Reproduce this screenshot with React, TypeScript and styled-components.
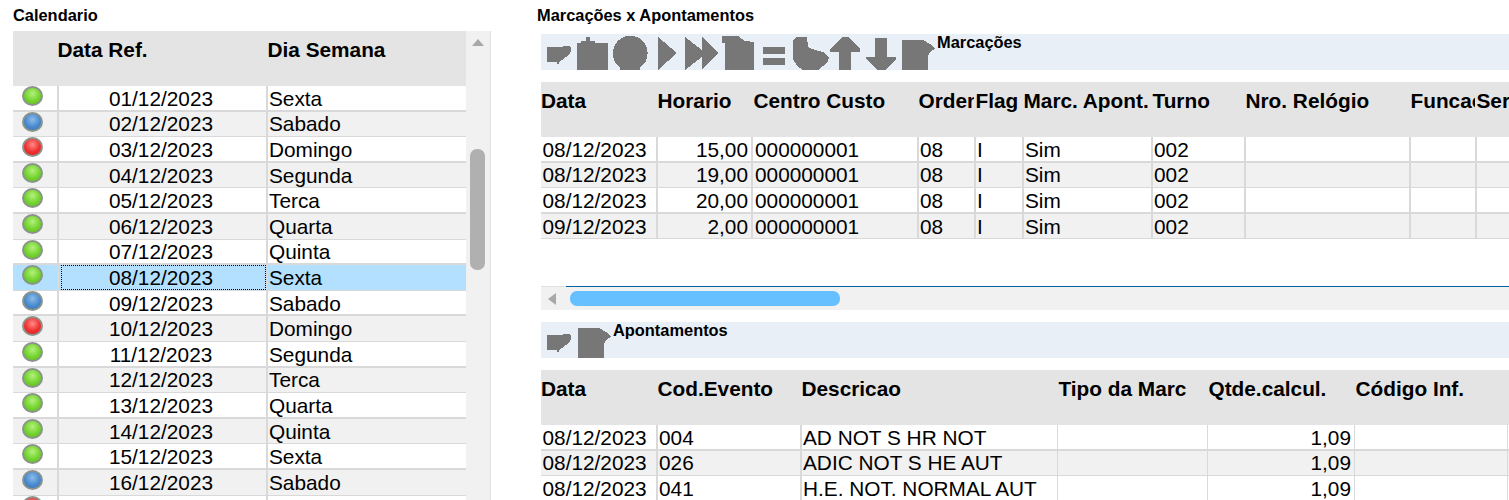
import React from "react";
import styled, { createGlobalStyle } from "styled-components";

const Global = createGlobalStyle`
  html, body { margin: 0; padding: 0; background: #fff; }
  body { font-family: "Liberation Sans", Arial, sans-serif; color: #000; height: 500px; overflow: hidden; }
  * { box-sizing: border-box; }
`;

const Page = styled.div`
  display: flex;
  height: 500px;
  overflow: hidden;
  padding-left: 13px;
`;
const LeftPanel = styled.section`
  width: 478px;
  flex: none;
  display: flex;
  flex-direction: column;
`;
const RightPanel = styled.section`
  flex: 1;
  min-width: 0;
  margin-left: 46px;
  overflow: hidden;
`;
const Title = styled.h2<{ $h: number }>`
  margin: 0;
  height: ${(p) => p.$h}px;
  line-height: 31px;
  font-size: 16.4px;
  font-weight: 700;
  white-space: nowrap;
`;
const CalendarBody = styled.div`
  display: flex;
  flex: 1;
  min-height: 0;
`;
const CalendarTable = styled.div`
  width: 453px;
  flex: none;
`;
const VScroll = styled.div`
  width: 25px;
  flex: none;
  background: #f1f1f1;
  border-right: 1px solid #e2e2e2;
  display: flex;
  flex-direction: column;
  align-items: center;
  padding: 8px 1px 0 0;
`;
const UpArrow = styled.div`
  width: 0;
  height: 0;
  border-left: 6px solid transparent;
  border-right: 6px solid transparent;
  border-bottom: 7px solid #a8a8a8;
`;
const VThumb = styled.div`
  width: 15px;
  height: 121px;
  margin-top: 103px;
  border-radius: 7px;
  background: #b0b0b0;
`;
const Marcacoes = styled.div`
  margin-left: 4px;
`;
const Toolbar = styled.div`
  height: 36px;
  background: #e8eff6;
  display: flex;
  align-items: flex-start;
  padding-left: 6px;
`;
const ToolSvg = styled.svg<{ $gap: number }>`
  flex: none;
  display: block;
  margin-left: ${(p) => p.$gap}px;
  fill: #777777;
`;
const ToolLabel = styled.span`
  font-size: 16.4px;
  font-weight: 700;
  line-height: 16px;
  margin-left: 2px;
  white-space: nowrap;
`;
const GridArea = styled.div<{ $h?: number }>`
  margin-top: 12px;
  ${(p) => (p.$h ? `height: ${p.$h}px;` : "")}
`;
const HeadRow = styled.div<{ $cols: string }>`
  display: grid;
  grid-template-columns: ${(p) => p.$cols};
  height: 55px;
  background: #e4e4e4;
`;
const HeadCell = styled.div<{ $pad?: number }>`
  font-size: 20.8px;
  font-weight: 700;
  line-height: 24px;
  padding: 7px 0 0 ${(p) => p.$pad ?? 1.5}px;
  overflow: hidden;
  white-space: nowrap;
`;
const DataRow = styled.div<{ $cols: string; $odd: boolean; $sel?: boolean }>`
  display: grid;
  grid-template-columns: ${(p) => p.$cols};
  height: 25.6px;
  background: ${(p) => (p.$sel ? "#b3e0ff" : p.$odd ? "#ffffff" : "#f1f1f1")};
  box-shadow: inset 0 ${(p) => (p.$odd ? "-2px" : "-1px")} 0 #d9d9d9;
`;
const Cell = styled.div<{ $line?: "none" | "thin" | "thick"; $right?: boolean; $pad?: number; $rightPad?: number }>`
  font-size: 20.8px;
  line-height: 24px;
  height: 100%;
  min-width: 0;
  overflow: hidden;
  white-space: nowrap;
  display: flex;
  align-items: center;
  padding-left: ${(p) => p.$pad ?? 1}px;
  border-left: ${(p) => (p.$line === "none" ? "0" : p.$line === "thin" ? "1px solid #d9d9d9" : "2px solid #d9d9d9")};
  justify-content: ${(p) => (p.$right ? "flex-end" : "flex-start")};
  padding-right: ${(p) => p.$rightPad ?? 0}px;
`;
const BallCell = styled.div`
  padding-left: 9px;
  height: 100%;
`;
const tones = {
  green: ["#b4f07c", "#74d430", "#5cb81e"],
  blue: ["#8dbcea", "#4a8ace", "#3670b0"],
  red: ["#ff8a8a", "#f03030", "#d81c1c"],
};
const Ball = styled.div<{ $tone: keyof typeof tones }>`
  width: 21px;
  height: 20px;
  border-radius: 50%;
  border: 2px solid #8b948b;
  background: radial-gradient(circle at 50% 35%, ${(p) => tones[p.$tone][0]} 0%, ${(p) => tones[p.$tone][1]} 55%, ${(p) => tones[p.$tone][2]} 100%);
`;
const DateFocus = styled.div<{ $sel: boolean }>`
  flex: 1;
  height: calc(100% - 1px);
  display: flex;
  align-items: center;
  justify-content: center;
  padding: 1px 5px 0 0;
  border: 1px ${(p) => (p.$sel ? "dotted #000" : "solid transparent")};
  margin: 0 0 1px 1px;
`;
const HScroll = styled.div`
  display: flex;
  height: 24px;
  background: #f1f1f1;
`;
const HButton = styled.div`
  width: 25px;
  flex: none;
  border-top: 1px solid #e0e0e0;
  display: flex;
  align-items: center;
  padding-left: 7px;
`;
const LeftArrow = styled.div`
  width: 0;
  height: 0;
  border-top: 6px solid transparent;
  border-bottom: 6px solid transparent;
  border-right: 8px solid #a8a8a8;
`;
const HTrack = styled.div`
  flex: 1;
  border-top: 1px solid #005f9e;
  padding: 4px 0 0 4px;
`;
const HThumb = styled.div`
  width: 270px;
  height: 15px;
  border-radius: 7px;
  background: #66bfff;
`;
const Apontamentos = styled.div`
  margin: 12px 0 0 4px;
`;

type Shape = { x0: number; x1: number; d: string; gap: number };
const arrowIcon =
  "M547 47L562 47L563 46L569 46L571 48L571 51L570 53L566 57L562 60L559 62L559 64L557 64L557 62L547 62Z";
const docIcon = (dx: number) =>
  `M${902 + dx} 40L${923 + dx} 40L${930 + dx} 44L${935 + dx} 49L${930 + dx} 52L${928 + dx} 56L${928 + dx} 70L${902 + dx} 70Z`;
const topIcons: Shape[] = [
  { x0: 547, x1: 572, gap: 0, d: arrowIcon },
  { x0: 577, x1: 608, gap: 5, d: "M577 43L581 43L581 41L586 41L586 37L590 37L590 41L595 41L595 43L608 43L608 70L577 70Z" },
  { x0: 613, x1: 648, gap: 5, d: "M613 53A17.3 17.3 0 1 1 647.6 53A17.3 17.3 0 0 1 640 67.5L640 70L620 70L620 67.5A17.3 17.3 0 0 1 613 53Z" },
  { x0: 658, x1: 677, gap: 10, d: "M658 37L677 53L658 70Z" },
  { x0: 685, x1: 718, gap: 8, d: "M685 37L702 50L702 37L718 53L702 70L702 57L685 70Z" },
  { x0: 722, x1: 754, gap: 4, d: "M722 36L738 36L745 41L754 42L754 70L725 70L725 43L722 43Z" },
  { x0: 763, x1: 785, gap: 9, d: "M763 47L785 47L785 54L763 54ZM763 58L785 58L785 65L763 65Z" },
  { x0: 793, x1: 829, gap: 8, d: "M793 40L797 37L807 37L808 47L812 49L823 52L829 57L828 62L823 66L818 70L803 70L797 66L793 59Z" },
  { x0: 830, x1: 860, gap: 1, d: "M842 37L848 37L860 49L860 52L851 52L851 70L839 70L839 52L830 52L830 50Z" },
  { x0: 866, x1: 896, gap: 6, d: "M875 38L887 38L887 57L896 57L896 59L890 66L885 70L878 70L873 66L866 59L866 57L875 57Z" },
  { x0: 902, x1: 935, gap: 6, d: docIcon(0) },
];
const bottomIcons: Shape[] = [
  { x0: 547, x1: 572, gap: 0, d: arrowIcon },
  { x0: 578, x1: 611, gap: 6, d: docIcon(-324) },
];

function Tools({ icons, label }: { icons: Shape[]; label: string }) {
  return (
    <Toolbar>
      {icons.map((s) => (
        <ToolSvg
          key={s.x0}
          $gap={s.gap}
          width={s.x1 - s.x0}
          height={36}
          viewBox={`${s.x0} 34 ${s.x1 - s.x0} 36`}
          shapeRendering="crispEdges"
        >
          <path d={s.d} />
        </ToolSvg>
      ))}
      <ToolLabel>{label}</ToolLabel>
    </Toolbar>
  );
}

type Tone = keyof typeof tones;
const days: [string, string, Tone][] = [
  ["01/12/2023", "Sexta", "green"],
  ["02/12/2023", "Sabado", "blue"],
  ["03/12/2023", "Domingo", "red"],
  ["04/12/2023", "Segunda", "green"],
  ["05/12/2023", "Terca", "green"],
  ["06/12/2023", "Quarta", "green"],
  ["07/12/2023", "Quinta", "green"],
  ["08/12/2023", "Sexta", "green"],
  ["09/12/2023", "Sabado", "blue"],
  ["10/12/2023", "Domingo", "red"],
  ["11/12/2023", "Segunda", "green"],
  ["12/12/2023", "Terca", "green"],
  ["13/12/2023", "Quarta", "green"],
  ["14/12/2023", "Quinta", "green"],
  ["15/12/2023", "Sexta", "green"],
  ["16/12/2023", "Sabado", "blue"],
  ["17/12/2023", "Domingo", "red"],
];
const calCols = "44px 209px 200px";
const marcCols = "115px 95px 166px 57px 48px 129px 93px 165px 66px 66px";
const marcHead = ["Data", "Horario", "Centro Custo", "Orden", "Flag", "Marc. Apont.", "Turno", "Nro. Relógio", "Funcao", "Serie"];
const marcRows = [
  ["08/12/2023", "15,00", "000000001", "08", "I", "Sim", "002", "", "", ""],
  ["08/12/2023", "19,00", "000000001", "08", "I", "Sim", "002", "", "", ""],
  ["08/12/2023", "20,00", "000000001", "08", "I", "Sim", "002", "", "", ""],
  ["09/12/2023", "2,00", "000000001", "08", "I", "Sim", "002", "", "", ""],
];
const apontCols = "115px 144px 257px 150px 147px 153px 100px";
const apontHead = ["Data", "Cod.Evento", "Descricao", "Tipo da Marc", "Qtde.calcul.", "Código Inf.", ""];
const apontRows = [
  ["08/12/2023", "004", "AD NOT S HR NOT", "", "1,09", "", ""],
  ["08/12/2023", "026", "ADIC NOT S HE AUT", "", "1,09", "", ""],
  ["08/12/2023", "041", "H.E. NOT. NORMAL AUT", "", "1,09", "", ""],
];

export default function App() {
  return (
    <Page>
      <Global />
      <LeftPanel>
        <Title $h={31}>Calendario</Title>
        <CalendarBody>
          <CalendarTable>
            <HeadRow $cols={calCols}>
              <HeadCell />
              <HeadCell $pad={0.5}>Data Ref.</HeadCell>
              <HeadCell>Dia Semana</HeadCell>
            </HeadRow>
            {days.map(([d, w, tone], i) => (
              <DataRow key={d} $cols={calCols} $odd={i % 2 === 0} $sel={i === 7}>
                <BallCell>
                  <Ball $tone={tone} />
                </BallCell>
                <Cell>
                  <DateFocus $sel={i === 7}>{d}</DateFocus>
                </Cell>
                <Cell>{w}</Cell>
              </DataRow>
            ))}
          </CalendarTable>
          <VScroll>
            <UpArrow />
            <VThumb />
          </VScroll>
        </CalendarBody>
      </LeftPanel>
      <RightPanel>
        <Title $h={34}>Marcações x Apontamentos</Title>
        <Marcacoes>
          <Tools icons={topIcons} label="Marcações" />
          <GridArea $h={204}>
            <HeadRow $cols={marcCols}>
              {marcHead.map((h, i) => (
                <HeadCell key={h} $pad={i === 0 ? 0 : i === 2 ? 2.5 : 1.5}>{h}</HeadCell>
              ))}
            </HeadRow>
            {marcRows.map((r, i) => (
              <DataRow key={i} $cols={marcCols} $odd={i % 2 === 0}>
                {r.map((c, j) => (
                  <Cell
                    key={j}
                    $line={j === 0 ? "none" : "thick"}
                    $right={j === 1}
                    $pad={j === 0 ? 1.5 : j === 2 ? 2 : 1}
                    $rightPad={j === 1 ? 3 : 0}
                  >
                    {c}
                  </Cell>
                ))}
              </DataRow>
            ))}
          </GridArea>
          <HScroll>
            <HButton>
              <LeftArrow />
            </HButton>
            <HTrack>
              <HThumb />
            </HTrack>
          </HScroll>
        </Marcacoes>
        <Apontamentos>
          <Tools icons={bottomIcons} label="Apontamentos" />
          <GridArea>
            <HeadRow $cols={apontCols}>
              {apontHead.map((h, i) => (
                <HeadCell key={i} $pad={i === 0 ? 0 : 1.5}>{h}</HeadCell>
              ))}
            </HeadRow>
            {apontRows.map((r, i) => (
              <DataRow key={i} $cols={apontCols} $odd={i % 2 === 0}>
                {r.map((c, j) => (
                  <Cell
                    key={j}
                    $line={j === 0 ? "none" : j >= 3 ? "thin" : "thick"}
                    $right={j === 4}
                    $pad={j === 0 ? 1.5 : 1}
                    $rightPad={j === 4 ? 3 : 0}
                  >
                    {c}
                  </Cell>
                ))}
              </DataRow>
            ))}
          </GridArea>
        </Apontamentos>
      </RightPanel>
    </Page>
  );
}
